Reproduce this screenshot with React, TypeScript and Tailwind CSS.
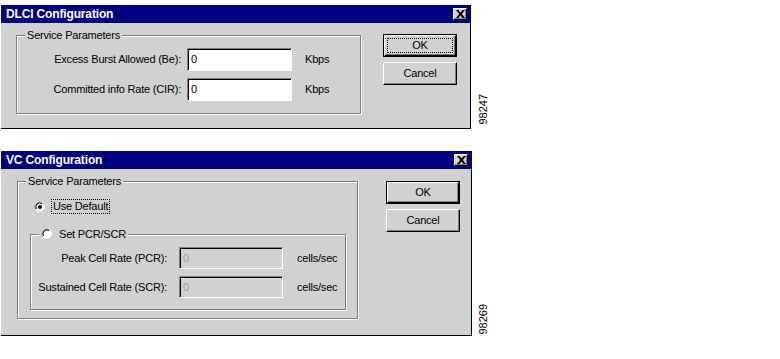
import React from "react";

const face = "bg-[#d1d1d1]";

function CloseBox() {
  return (
    <div className="w-[14px] h-[12px] bg-[#d1d1d1] border-t border-l border-white border-r border-b border-r-black border-b-black shadow-[inset_-1px_-1px_0_#808080] flex items-center justify-center">
      <svg width="9" height="8" viewBox="0 0 9 8">
        <path d="M0 0h2.4L4.5 2.6 6.6 0H9L5.8 4 9 8H6.6L4.5 5.4 2.4 8H0l3.2-4z" fill="#000" />
      </svg>
    </div>
  );
}

function TitleBar({ title }: { title: string }) {
  return (
    <div className="h-[18px] bg-[#000080] flex items-center justify-between pl-[5px] pr-[3px]">
      <span className="text-white font-bold text-[12px] tracking-[-0.15px] leading-none">{title}</span>
      <CloseBox />
    </div>
  );
}

function Btn({ label, isDefault, focus }: { label: string; isDefault?: boolean; focus?: boolean }) {
  return (
    <div className={isDefault ? "border border-black" : ""}>
      <div
        className={
          "flex items-center justify-center border-t border-l border-white border-r border-b border-r-black border-b-black shadow-[inset_-1px_-1px_0_#808080] " +
          (isDefault ? "h-[21px] w-[72px] p-[2px]" : "h-[23px] w-[74px]")
        }
      >
        <span
          className={
            "flex items-center justify-center " +
            (focus ? "w-full h-full border border-dotted border-black" : "")
          }
        >
          {label}
        </span>
      </div>
    </div>
  );
}

function Field({ disabled, w, h }: { disabled?: boolean; w: string; h: string }) {
  return (
    <div
      className={
        "border border-t-[#808080] border-l-[#808080] border-b-white border-r-white shadow-[inset_1px_1px_0_#000] pl-[3px] flex items-center " +
        w +
        " " +
        h +
        (disabled ? " bg-[#d1d1d1] text-[#a0a0a0]" : " bg-white text-black")
      }
    >
      0
    </div>
  );
}

function Radio({ checked }: { checked?: boolean }) {
  return (
    <svg width="12" height="12" viewBox="0 0 12 12">
      <path d="M8 1.5A5 5 0 0 0 1.5 8" stroke="#808080" fill="none" />
      <circle cx="6" cy="6" r="4.5" fill="#fff" />
      <path d="M9.5 2.5A5 5 0 0 1 2.5 9.5" stroke="#fff" fill="none" />
      <path d="M8 2.5A4 4 0 0 0 2.5 8" stroke="#000" fill="none" />
      {checked && <circle cx="6" cy="6" r="2" fill="#000" />}
    </svg>
  );
}

function Group({ className, label, children }: { className: string; label: React.ReactNode; children: React.ReactNode }) {
  return (
    <div className={"relative border border-[#808080] shadow-[inset_1px_1px_0_#fff,1px_1px_0_#fff] " + className}>
      <div className={"absolute -top-[8px] left-[8px] px-[2px] leading-[14px] " + face}>{label}</div>
      {children}
    </div>
  );
}

export default function App() {
  return (
    <div
      className="w-[780px] h-[359px] bg-white pt-[5px] text-black text-[11px] tracking-[-0.2px] overflow-hidden"
      style={{ fontFamily: '"Liberation Sans", Arial, sans-serif' }}
    >
      {/* DLCI dialog */}
      <div className="flex items-end">
        <div className={"ml-[1px] w-[470px] border-r border-b border-black " + face}>
          <TitleBar title="DLCI Configuration" />
          <div className="h-[105px] flex items-start">
            <Group className="mt-[12px] ml-[15px] w-[345px] h-[79px] pt-[12px]" label="Service Parameters">
              <div className="flex flex-col gap-[7px]">
                <div className="flex items-center">
                  <span className="w-[164px] text-right">Excess Burst Allowed (Be):</span>
                  <span className="ml-[6px]">
                    <Field w="w-[105px]" h="h-[23px]" />
                  </span>
                  <span className="ml-[13px]">Kbps</span>
                </div>
                <div className="flex items-center">
                  <span className="w-[164px] text-right">Committed info Rate (CIR):</span>
                  <span className="ml-[6px]">
                    <Field w="w-[105px]" h="h-[23px]" />
                  </span>
                  <span className="ml-[13px]">Kbps</span>
                </div>
              </div>
            </Group>
            <div className="ml-[22px] mt-[11px] flex flex-col gap-[5px]">
              <Btn label="OK" isDefault focus />
              <Btn label="Cancel" />
            </div>
          </div>
        </div>
        <span className="ml-[6px] mb-[4px] [writing-mode:vertical-rl] rotate-180 tracking-normal leading-[12px]">98247</span>
      </div>

      {/* VC dialog */}
      <div className="flex items-end mt-[22px]">
        <div className={"ml-[1px] w-[471px] border-r border-b border-black " + face}>
          <TitleBar title="VC Configuration" />
          <div className="h-[166px] flex items-start">
            <Group className="mt-[12px] ml-[16px] w-[341px] h-[138px] pt-[17px]" label="Service Parameters">
              <div className="flex items-center ml-[16px]">
                <Radio checked />
                <span className="ml-[5px] px-[1px] border border-dotted border-black leading-[13px]">Use Default</span>
              </div>
              <Group
                className="mt-[20px] ml-[12px] w-[316px] h-[76px] pt-[12px]"
                label={
                  <span className="flex items-center gap-[6px]">
                    <Radio />
                    <span>Set PCR/SCR</span>
                  </span>
                }
              >
                <div className="flex flex-col gap-[7px]">
                  <div className="flex items-center">
                    <span className="w-[136px] text-right">Peak Cell Rate (PCR):</span>
                    <span className="ml-[12px]">
                      <Field disabled w="w-[104px]" h="h-[22px]" />
                    </span>
                    <span className="ml-[14px]">cells/sec</span>
                  </div>
                  <div className="flex items-center">
                    <span className="w-[136px] text-right">Sustained Cell Rate (SCR):</span>
                    <span className="ml-[12px]">
                      <Field disabled w="w-[104px]" h="h-[22px]" />
                    </span>
                    <span className="ml-[14px]">cells/sec</span>
                  </div>
                </div>
              </Group>
            </Group>
            <div className="ml-[28px] mt-[12px] flex flex-col gap-[5px]">
              <Btn label="OK" isDefault />
              <Btn label="Cancel" />
            </div>
          </div>
        </div>
        <span className="ml-[5px] mb-[1px] [writing-mode:vertical-rl] rotate-180 tracking-normal leading-[12px]">98269</span>
      </div>
    </div>
  );
}
